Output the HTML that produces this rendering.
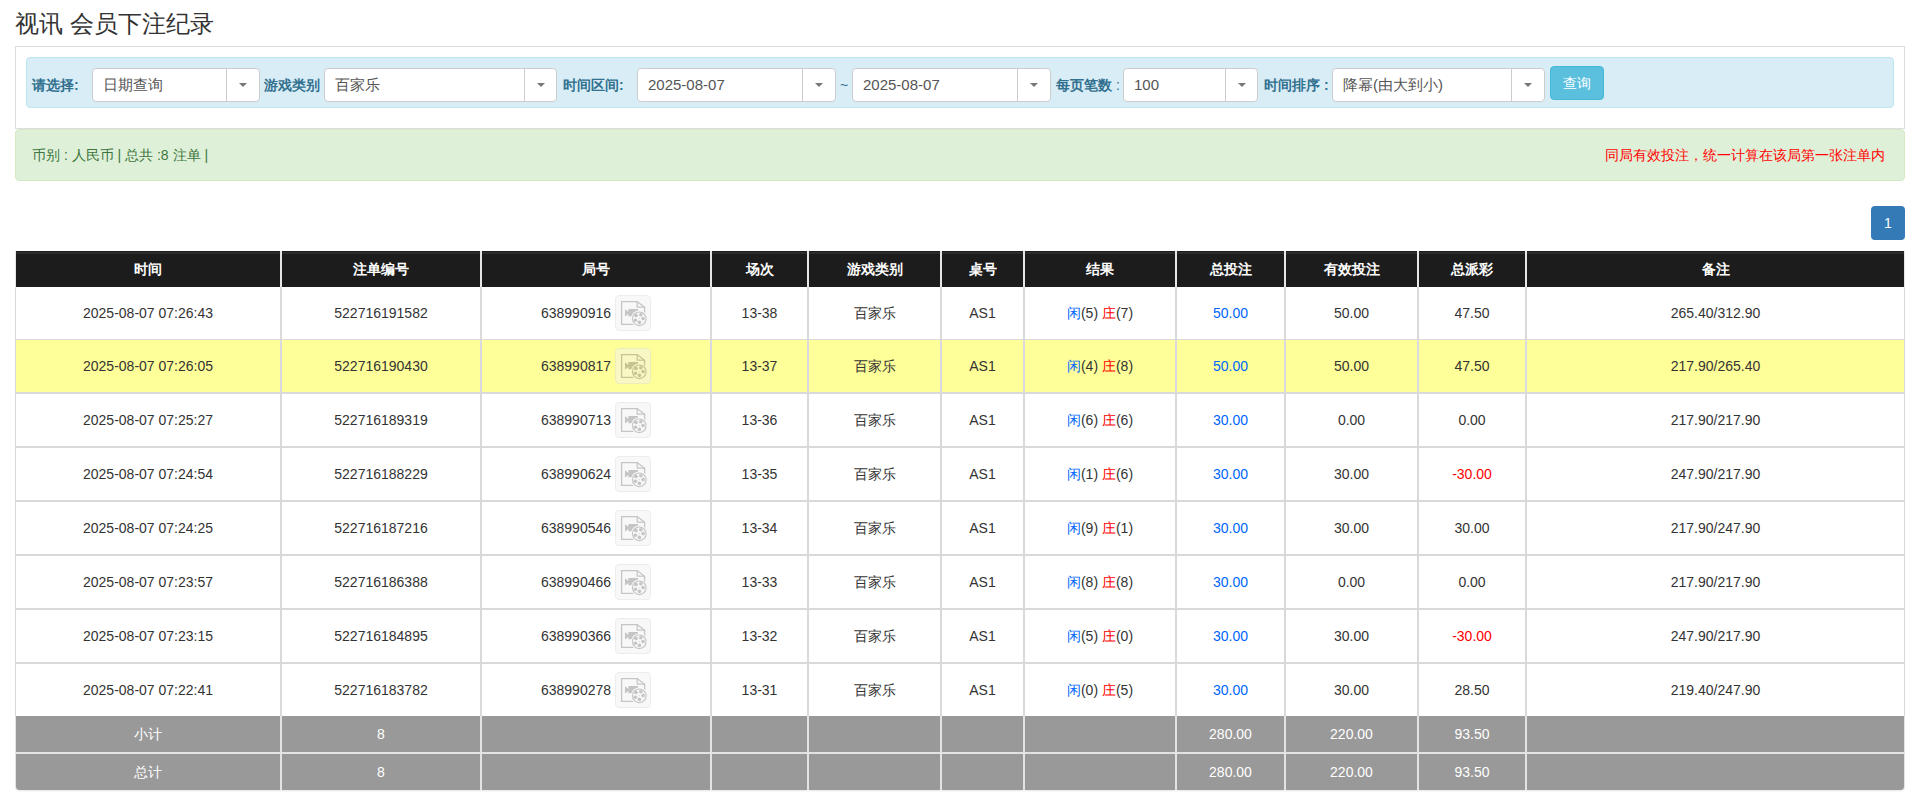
<!DOCTYPE html>
<html><head><meta charset="utf-8"><style>
*{box-sizing:border-box}
html,body{margin:0;padding:0;background:#fff}
body{width:1915px;height:800px;overflow:hidden;position:relative;font-family:"Liberation Sans",sans-serif;font-size:14px;color:#333}
.abs{position:absolute}
.title{left:15px;top:7px;font-size:24px;line-height:34px;color:#333;white-space:nowrap}
.panel{left:15px;top:46px;width:1890px;height:83px;border:1px solid #ddd}
.info{left:26px;top:57px;width:1868px;height:51px;background:#d9edf7;border:1px solid #bce8f1;border-radius:4px}
.lbl{top:68px;height:34px;line-height:34px;font-size:14px;font-weight:bold;color:#31708f;white-space:nowrap}
.lbl i{font-style:normal;font-weight:normal}
.sel{top:68px;height:34px;border:1px solid #ccc;border-radius:4px;background:#fff;font-size:15px;line-height:32px;color:#555;padding-left:10px;white-space:nowrap}
.sel .dv{position:absolute;top:0;bottom:0;width:1px;background:#ccc}
.sel .cr{position:absolute;top:14px;width:0;height:0;border-left:4px solid transparent;border-right:4px solid transparent;border-top:4px solid #777}
.btn{left:1550px;top:66px;width:54px;height:34px;background:#5bc0de;border:1px solid #46b8da;border-radius:4px;color:#fff;font-size:14px;line-height:32px;text-align:center}
.tilde{top:68px;height:34px;line-height:34px;left:840px;font-size:14px;color:#31708f}
.ok{left:15px;top:129px;width:1890px;height:52px;background:#dff0d8;border:1px solid #d6e9c6;border-radius:4px}
.okt{left:32px;top:129px;height:52px;line-height:52px;color:#3c763d;font-size:14px;white-space:nowrap}
.red{right:30px;top:129px;height:52px;line-height:52px;color:#f00;font-size:14px;white-space:nowrap}
.shd{left:15px;top:251px;width:1890px;height:539px;border-radius:0 0 4px 4px;box-shadow:0 2px 2px -1px rgba(0,0,0,.1)}
.pg{left:1871px;top:206px;width:34px;height:34px;background:#337ab7;border-radius:4px;color:#fff;text-align:center;line-height:34px;font-size:14px}
table{position:absolute;left:15px;top:251px;border-collapse:separate;border-spacing:0;table-layout:fixed;width:1890px}
td{padding:0;line-height:16px;text-align:center;vertical-align:middle;border-left:1px solid #d9d9d9;border-right:1px solid #d9d9d9;white-space:nowrap;overflow:hidden}
tr.h td{height:36px;background:linear-gradient(#1c1c1c 0 1px,#2b2b2b 1px 3px,#1c1c1c 3px);color:#fff;font-weight:bold;border-color:#e6e6e6}
tr.r td{height:53px;border-bottom:1px solid #d9d9d9;background:#fff}
tr.r.t td{height:54px;border-top:1px solid #d9d9d9}
tr.r.last td{border-bottom:0;height:53px}
tr.y td{background:#ffff99;border-color:#d9d9df}
tr.f td{height:36px;background:#999;color:#fff;border-color:#e3e3e3}
tr.f1 td{height:37px;border-bottom:1px solid #e3e3e3}
tr.f2 td{height:37px;border-top:1px solid #e3e3e3}
tr.f2 td:first-child{border-bottom-left-radius:4px}
tr.f2 td:last-child{border-bottom-right-radius:4px}
.b{color:#06f}.rd{color:#f00}
.ic{display:inline-block;vertical-align:middle;width:36px;height:36px;margin-left:4px;border:1px solid #ddd;border-radius:4px;background:#f2f2f2;opacity:.5;position:relative;top:0px}
.ic svg{position:absolute;left:-1px;top:-1px}
</style></head><body>
<div class="abs title">视讯 会员下注纪录</div>
<div class="abs panel"></div>
<div class="abs info"></div>

<div class="abs lbl" style="left:32px">请选择:</div>
<div class="abs lbl" style="left:264px">游戏类别</div>
<div class="abs lbl" style="left:563px">时间区间:</div>
<div class="abs lbl" style="left:1056px">每页笔数 <i>:</i></div>
<div class="abs lbl" style="left:1264px">时间排序 :</div>
<div class="abs sel" style="left:92px;width:168px">日期查询<span class="dv" style="left:133px"></span><span class="cr" style="left:146.0px"></span></div>
<div class="abs sel" style="left:324px;width:233px">百家乐<span class="dv" style="left:199px"></span><span class="cr" style="left:211.5px"></span></div>
<div class="abs sel" style="left:637px;width:199px">2025-08-07<span class="dv" style="left:164px"></span><span class="cr" style="left:177.0px"></span></div>
<div class="abs sel" style="left:852px;width:199px">2025-08-07<span class="dv" style="left:164px"></span><span class="cr" style="left:177.0px"></span></div>
<div class="abs sel" style="left:1123px;width:135px">100<span class="dv" style="left:101px"></span><span class="cr" style="left:113.5px"></span></div>
<div class="abs sel" style="left:1332px;width:213px">降幂(由大到小)<span class="dv" style="left:178px"></span><span class="cr" style="left:191.0px"></span></div>
<div class="abs tilde">~</div>
<div class="abs btn">查询</div>
<div class="abs ok"></div>
<div class="abs okt">币别 : 人民币 | 总共 :8 注单 |</div>
<div class="abs red">同局有效投注，统一计算在该局第一张注单内</div>
<div class="abs pg">1</div>
<div class="abs shd"></div>
<table><colgroup><col style="width:266px"><col style="width:200px"><col style="width:230px"><col style="width:97px"><col style="width:133px"><col style="width:83px"><col style="width:152px"><col style="width:109px"><col style="width:133px"><col style="width:108px"><col style="width:379px"></colgroup>
<tr class="h"><td>时间</td><td>注单编号</td><td>局号</td><td>场次</td><td>游戏类别</td><td>桌号</td><td>结果</td><td>总投注</td><td>有效投注</td><td>总派彩</td><td>备注</td></tr>
<tr class="r"><td>2025-08-07 07:26:43</td><td>522716191582</td><td><span style="position:relative;top:1px">638990916</span><span class="ic"><svg width="36" height="36" viewBox="0 0 36 36"><path d="M6.6 6.6H22.2L29.6 12.2V29.4H6.6Z" fill="none" stroke="#8c8c8c" stroke-width="1.3"/><path d="M22.2 6.6V12.2H29.6" fill="none" stroke="#8c8c8c" stroke-width="1.2"/><path d="M10 14.3L13.6 17V18.8L10 21.5Z M13.4 14H23V21.2H13.4Z" fill="#8c8c8c"/><circle cx="24.3" cy="23.8" r="8.4" fill="#f2f2f2"/><circle cx="24.3" cy="23.8" r="6.8" fill="none" stroke="#8c8c8c" stroke-width="1.1"/><circle cx="21" cy="20.5" r="1.8" fill="#8c8c8c"/><circle cx="25.8" cy="19.8" r="1.8" fill="#8c8c8c"/><circle cx="28.1" cy="23.6" r="1.8" fill="#8c8c8c"/><circle cx="24.4" cy="27.4" r="1.8" fill="#8c8c8c"/><circle cx="20.4" cy="25.2" r="1.8" fill="#8c8c8c"/><circle cx="24.1" cy="23.6" r="0.5" fill="#8c8c8c"/></svg></span></td><td>13-38</td><td>百家乐</td><td>AS1</td><td><span class="b">闲</span>(5) <span class="rd">庄</span>(7)</td><td><span class="b">50.00</span></td><td>50.00</td><td>47.50</td><td>265.40/312.90</td></tr>
<tr class="r y"><td>2025-08-07 07:26:05</td><td>522716190430</td><td><span style="position:relative;top:1px">638990817</span><span class="ic"><svg width="36" height="36" viewBox="0 0 36 36"><path d="M6.6 6.6H22.2L29.6 12.2V29.4H6.6Z" fill="none" stroke="#8c8c8c" stroke-width="1.3"/><path d="M22.2 6.6V12.2H29.6" fill="none" stroke="#8c8c8c" stroke-width="1.2"/><path d="M10 14.3L13.6 17V18.8L10 21.5Z M13.4 14H23V21.2H13.4Z" fill="#8c8c8c"/><circle cx="24.3" cy="23.8" r="8.4" fill="#f2f2f2"/><circle cx="24.3" cy="23.8" r="6.8" fill="none" stroke="#8c8c8c" stroke-width="1.1"/><circle cx="21" cy="20.5" r="1.8" fill="#8c8c8c"/><circle cx="25.8" cy="19.8" r="1.8" fill="#8c8c8c"/><circle cx="28.1" cy="23.6" r="1.8" fill="#8c8c8c"/><circle cx="24.4" cy="27.4" r="1.8" fill="#8c8c8c"/><circle cx="20.4" cy="25.2" r="1.8" fill="#8c8c8c"/><circle cx="24.1" cy="23.6" r="0.5" fill="#8c8c8c"/></svg></span></td><td>13-37</td><td>百家乐</td><td>AS1</td><td><span class="b">闲</span>(4) <span class="rd">庄</span>(8)</td><td><span class="b">50.00</span></td><td>50.00</td><td>47.50</td><td>217.90/265.40</td></tr>
<tr class="r t"><td>2025-08-07 07:25:27</td><td>522716189319</td><td><span style="position:relative;top:1px">638990713</span><span class="ic"><svg width="36" height="36" viewBox="0 0 36 36"><path d="M6.6 6.6H22.2L29.6 12.2V29.4H6.6Z" fill="none" stroke="#8c8c8c" stroke-width="1.3"/><path d="M22.2 6.6V12.2H29.6" fill="none" stroke="#8c8c8c" stroke-width="1.2"/><path d="M10 14.3L13.6 17V18.8L10 21.5Z M13.4 14H23V21.2H13.4Z" fill="#8c8c8c"/><circle cx="24.3" cy="23.8" r="8.4" fill="#f2f2f2"/><circle cx="24.3" cy="23.8" r="6.8" fill="none" stroke="#8c8c8c" stroke-width="1.1"/><circle cx="21" cy="20.5" r="1.8" fill="#8c8c8c"/><circle cx="25.8" cy="19.8" r="1.8" fill="#8c8c8c"/><circle cx="28.1" cy="23.6" r="1.8" fill="#8c8c8c"/><circle cx="24.4" cy="27.4" r="1.8" fill="#8c8c8c"/><circle cx="20.4" cy="25.2" r="1.8" fill="#8c8c8c"/><circle cx="24.1" cy="23.6" r="0.5" fill="#8c8c8c"/></svg></span></td><td>13-36</td><td>百家乐</td><td>AS1</td><td><span class="b">闲</span>(6) <span class="rd">庄</span>(6)</td><td><span class="b">30.00</span></td><td>0.00</td><td>0.00</td><td>217.90/217.90</td></tr>
<tr class="r t"><td>2025-08-07 07:24:54</td><td>522716188229</td><td><span style="position:relative;top:1px">638990624</span><span class="ic"><svg width="36" height="36" viewBox="0 0 36 36"><path d="M6.6 6.6H22.2L29.6 12.2V29.4H6.6Z" fill="none" stroke="#8c8c8c" stroke-width="1.3"/><path d="M22.2 6.6V12.2H29.6" fill="none" stroke="#8c8c8c" stroke-width="1.2"/><path d="M10 14.3L13.6 17V18.8L10 21.5Z M13.4 14H23V21.2H13.4Z" fill="#8c8c8c"/><circle cx="24.3" cy="23.8" r="8.4" fill="#f2f2f2"/><circle cx="24.3" cy="23.8" r="6.8" fill="none" stroke="#8c8c8c" stroke-width="1.1"/><circle cx="21" cy="20.5" r="1.8" fill="#8c8c8c"/><circle cx="25.8" cy="19.8" r="1.8" fill="#8c8c8c"/><circle cx="28.1" cy="23.6" r="1.8" fill="#8c8c8c"/><circle cx="24.4" cy="27.4" r="1.8" fill="#8c8c8c"/><circle cx="20.4" cy="25.2" r="1.8" fill="#8c8c8c"/><circle cx="24.1" cy="23.6" r="0.5" fill="#8c8c8c"/></svg></span></td><td>13-35</td><td>百家乐</td><td>AS1</td><td><span class="b">闲</span>(1) <span class="rd">庄</span>(6)</td><td><span class="b">30.00</span></td><td>30.00</td><td><span class="rd">-30.00</span></td><td>247.90/217.90</td></tr>
<tr class="r t"><td>2025-08-07 07:24:25</td><td>522716187216</td><td><span style="position:relative;top:1px">638990546</span><span class="ic"><svg width="36" height="36" viewBox="0 0 36 36"><path d="M6.6 6.6H22.2L29.6 12.2V29.4H6.6Z" fill="none" stroke="#8c8c8c" stroke-width="1.3"/><path d="M22.2 6.6V12.2H29.6" fill="none" stroke="#8c8c8c" stroke-width="1.2"/><path d="M10 14.3L13.6 17V18.8L10 21.5Z M13.4 14H23V21.2H13.4Z" fill="#8c8c8c"/><circle cx="24.3" cy="23.8" r="8.4" fill="#f2f2f2"/><circle cx="24.3" cy="23.8" r="6.8" fill="none" stroke="#8c8c8c" stroke-width="1.1"/><circle cx="21" cy="20.5" r="1.8" fill="#8c8c8c"/><circle cx="25.8" cy="19.8" r="1.8" fill="#8c8c8c"/><circle cx="28.1" cy="23.6" r="1.8" fill="#8c8c8c"/><circle cx="24.4" cy="27.4" r="1.8" fill="#8c8c8c"/><circle cx="20.4" cy="25.2" r="1.8" fill="#8c8c8c"/><circle cx="24.1" cy="23.6" r="0.5" fill="#8c8c8c"/></svg></span></td><td>13-34</td><td>百家乐</td><td>AS1</td><td><span class="b">闲</span>(9) <span class="rd">庄</span>(1)</td><td><span class="b">30.00</span></td><td>30.00</td><td>30.00</td><td>217.90/247.90</td></tr>
<tr class="r t"><td>2025-08-07 07:23:57</td><td>522716186388</td><td><span style="position:relative;top:1px">638990466</span><span class="ic"><svg width="36" height="36" viewBox="0 0 36 36"><path d="M6.6 6.6H22.2L29.6 12.2V29.4H6.6Z" fill="none" stroke="#8c8c8c" stroke-width="1.3"/><path d="M22.2 6.6V12.2H29.6" fill="none" stroke="#8c8c8c" stroke-width="1.2"/><path d="M10 14.3L13.6 17V18.8L10 21.5Z M13.4 14H23V21.2H13.4Z" fill="#8c8c8c"/><circle cx="24.3" cy="23.8" r="8.4" fill="#f2f2f2"/><circle cx="24.3" cy="23.8" r="6.8" fill="none" stroke="#8c8c8c" stroke-width="1.1"/><circle cx="21" cy="20.5" r="1.8" fill="#8c8c8c"/><circle cx="25.8" cy="19.8" r="1.8" fill="#8c8c8c"/><circle cx="28.1" cy="23.6" r="1.8" fill="#8c8c8c"/><circle cx="24.4" cy="27.4" r="1.8" fill="#8c8c8c"/><circle cx="20.4" cy="25.2" r="1.8" fill="#8c8c8c"/><circle cx="24.1" cy="23.6" r="0.5" fill="#8c8c8c"/></svg></span></td><td>13-33</td><td>百家乐</td><td>AS1</td><td><span class="b">闲</span>(8) <span class="rd">庄</span>(8)</td><td><span class="b">30.00</span></td><td>0.00</td><td>0.00</td><td>217.90/217.90</td></tr>
<tr class="r t"><td>2025-08-07 07:23:15</td><td>522716184895</td><td><span style="position:relative;top:1px">638990366</span><span class="ic"><svg width="36" height="36" viewBox="0 0 36 36"><path d="M6.6 6.6H22.2L29.6 12.2V29.4H6.6Z" fill="none" stroke="#8c8c8c" stroke-width="1.3"/><path d="M22.2 6.6V12.2H29.6" fill="none" stroke="#8c8c8c" stroke-width="1.2"/><path d="M10 14.3L13.6 17V18.8L10 21.5Z M13.4 14H23V21.2H13.4Z" fill="#8c8c8c"/><circle cx="24.3" cy="23.8" r="8.4" fill="#f2f2f2"/><circle cx="24.3" cy="23.8" r="6.8" fill="none" stroke="#8c8c8c" stroke-width="1.1"/><circle cx="21" cy="20.5" r="1.8" fill="#8c8c8c"/><circle cx="25.8" cy="19.8" r="1.8" fill="#8c8c8c"/><circle cx="28.1" cy="23.6" r="1.8" fill="#8c8c8c"/><circle cx="24.4" cy="27.4" r="1.8" fill="#8c8c8c"/><circle cx="20.4" cy="25.2" r="1.8" fill="#8c8c8c"/><circle cx="24.1" cy="23.6" r="0.5" fill="#8c8c8c"/></svg></span></td><td>13-32</td><td>百家乐</td><td>AS1</td><td><span class="b">闲</span>(5) <span class="rd">庄</span>(0)</td><td><span class="b">30.00</span></td><td>30.00</td><td><span class="rd">-30.00</span></td><td>247.90/217.90</td></tr>
<tr class="r t last"><td>2025-08-07 07:22:41</td><td>522716183782</td><td><span style="position:relative;top:1px">638990278</span><span class="ic"><svg width="36" height="36" viewBox="0 0 36 36"><path d="M6.6 6.6H22.2L29.6 12.2V29.4H6.6Z" fill="none" stroke="#8c8c8c" stroke-width="1.3"/><path d="M22.2 6.6V12.2H29.6" fill="none" stroke="#8c8c8c" stroke-width="1.2"/><path d="M10 14.3L13.6 17V18.8L10 21.5Z M13.4 14H23V21.2H13.4Z" fill="#8c8c8c"/><circle cx="24.3" cy="23.8" r="8.4" fill="#f2f2f2"/><circle cx="24.3" cy="23.8" r="6.8" fill="none" stroke="#8c8c8c" stroke-width="1.1"/><circle cx="21" cy="20.5" r="1.8" fill="#8c8c8c"/><circle cx="25.8" cy="19.8" r="1.8" fill="#8c8c8c"/><circle cx="28.1" cy="23.6" r="1.8" fill="#8c8c8c"/><circle cx="24.4" cy="27.4" r="1.8" fill="#8c8c8c"/><circle cx="20.4" cy="25.2" r="1.8" fill="#8c8c8c"/><circle cx="24.1" cy="23.6" r="0.5" fill="#8c8c8c"/></svg></span></td><td>13-31</td><td>百家乐</td><td>AS1</td><td><span class="b">闲</span>(0) <span class="rd">庄</span>(5)</td><td><span class="b">30.00</span></td><td>30.00</td><td>28.50</td><td>219.40/247.90</td></tr>
<tr class="f f1"><td>小计</td><td>8</td><td></td><td></td><td></td><td></td><td></td><td>280.00</td><td>220.00</td><td>93.50</td><td></td></tr>
<tr class="f f2"><td>总计</td><td>8</td><td></td><td></td><td></td><td></td><td></td><td>280.00</td><td>220.00</td><td>93.50</td><td></td></tr>
</table>
</body></html>
